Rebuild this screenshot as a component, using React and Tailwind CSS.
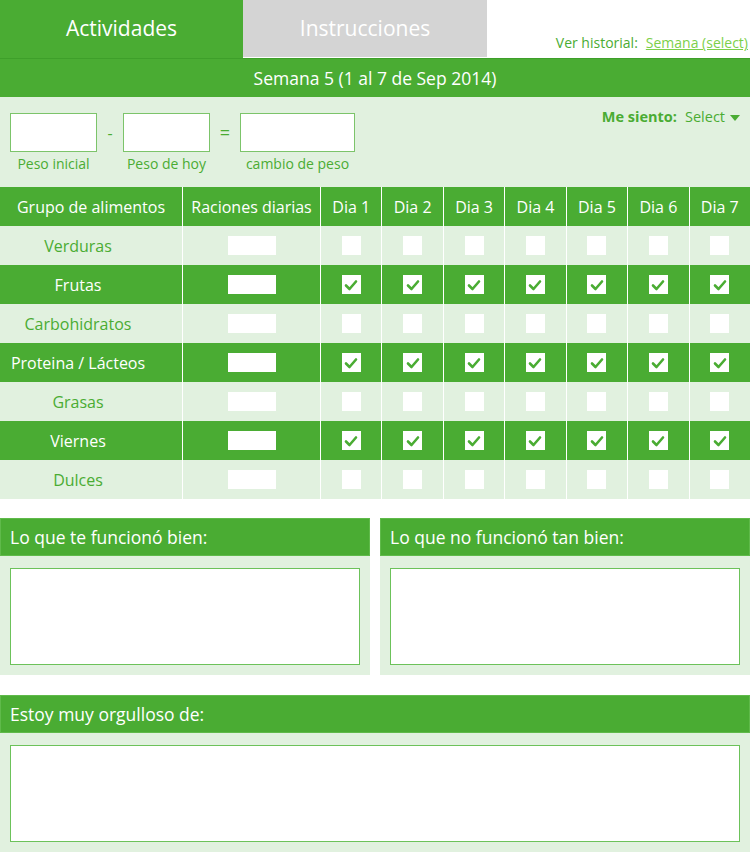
import React from "react";

const groups = [
  { name: "Verduras", on: false },
  { name: "Frutas", on: true },
  { name: "Carbohidratos", on: false },
  { name: "Proteina / Lácteos", on: true },
  { name: "Grasas", on: false },
  { name: "Viernes", on: true },
  { name: "Dulces", on: false },
];

const days = [1, 2, 3, 4, 5, 6, 7];

function Check({ checked }) {
  return (
    <div className="w-[19px] h-[19px] bg-white flex items-center justify-center">
      {checked && (
        <svg width="14" height="12" viewBox="0 0 14 12">
          <polyline
            points="2,6.5 5.5,10 12,2.5"
            fill="none"
            stroke="#4aac33"
            strokeWidth="2.6"
            strokeLinecap="round"
            strokeLinejoin="round"
          />
        </svg>
      )}
    </div>
  );
}

function Section({ title, className = "" }) {
  return (
    <div className={className}>
      <div className="h-[38px] bg-[#4aac33] border border-[#5fba4a] flex items-center px-[9px] text-white text-[17.5px]">
        {title}
      </div>
      <div className="bg-[#e1f1df] px-[10px] pt-[12px] pb-[10px]">
        <div className="h-[97px] bg-white border border-[#6cc25a]"></div>
      </div>
    </div>
  );
}

export default function App() {
  return (
    <div className="w-[750px] bg-white font-['Open_Sans',sans-serif] text-[#4aac33]">
      {/* tabs */}
      <div className="flex h-[58px]">
        <div className="w-[243px] bg-[#4aac33] flex items-center justify-center text-white text-[21px]">
          Actividades
        </div>
        <div className="w-[244px] h-[57px] bg-[#d4d4d4] flex items-center justify-center text-white text-[21px]">
          Instrucciones
        </div>
        <div className="flex-1 flex items-end justify-end pb-[5px] pr-[2px] text-[14px]">
          <span className="text-[#4aac33]">Ver historial:</span>
          <span className="ml-[8px] text-[#7ccf4a] underline">Semana (select)</span>
        </div>
      </div>
      <div className="h-[39px] bg-[#4aac33] border-t border-[#3e9f2a] flex items-center justify-center text-white text-[17.5px]">
        Semana 5 (1 al 7 de Sep 2014)
      </div>

      {/* weight */}
      <div className="h-[90px] bg-[#e1f1df] flex justify-between pl-[10px] pr-[10px]">
        <div className="flex items-start pt-[16px]">
          <div className="flex flex-col items-center">
            <div className="w-[87px] h-[39px] bg-white border border-[#7cc46a]"></div>
            <span className="text-[14px] mt-[1px]">Peso inicial</span>
          </div>
          <span className="w-[26px] text-center text-[16px] mt-[8px]">-</span>
          <div className="flex flex-col items-center">
            <div className="w-[87px] h-[39px] bg-white border border-[#7cc46a]"></div>
            <span className="text-[14px] mt-[1px]">Peso de hoy</span>
          </div>
          <span className="w-[30px] text-center text-[18px] mt-[6px]">=</span>
          <div className="flex flex-col items-center">
            <div className="w-[115px] h-[39px] bg-white border border-[#7cc46a]"></div>
            <span className="text-[14px] mt-[1px]">cambio de peso</span>
          </div>
        </div>
        <div className="pt-[9px] text-[14.5px] flex items-start">
          <span className="font-bold">Me siento:</span>
          <span className="ml-[8px]">Select</span>
          <svg width="10" height="6" viewBox="0 0 10 6" className="ml-[5px] mt-[9px]">
            <polygon points="0,0 10,0 5,6" fill="#4aac33" />
          </svg>
        </div>
      </div>

      {/* table */}
      <div className="grid grid-cols-[182px_138px_repeat(7,1fr)] text-[16px]">
        <div className="h-[39px] bg-[#4aac33] text-white flex items-center justify-center">Grupo de alimentos</div>
        <div className="h-[39px] bg-[#4aac33] text-white flex items-center justify-center border-l border-white">Raciones diarias</div>
        {days.map((d) => (
          <div key={d} className="h-[39px] bg-[#4aac33] text-white flex items-center justify-center border-l border-white">
            Dia {d}
          </div>
        ))}
        {groups.map((g) => {
          const bg = g.on ? "bg-[#4aac33] text-white" : "bg-[#e1f1df] text-[#4aac33]";
          return (
            <React.Fragment key={g.name}>
              <div className={`h-[39px] ${bg} flex items-center justify-center pr-[26px]`}>{g.name}</div>
              <div className={`h-[39px] ${bg} flex items-center justify-center border-l border-white`}>
                <div className="w-[48px] h-[19px] bg-white"></div>
              </div>
              {days.map((d) => (
                <div key={d} className={`h-[39px] ${bg} flex items-center justify-center border-l border-white`}>
                  <Check checked={g.on} />
                </div>
              ))}
            </React.Fragment>
          );
        })}
      </div>

      {/* notes */}
      <div className="flex gap-[10px] mt-[19px]">
        <Section title="Lo que te funcionó bien:" className="w-[370px]" />
        <Section title="Lo que no funcionó tan bien:" className="w-[370px]" />
      </div>
      <Section title="Estoy muy orgulloso de:" className="mt-[20px]" />
    </div>
  );
}
